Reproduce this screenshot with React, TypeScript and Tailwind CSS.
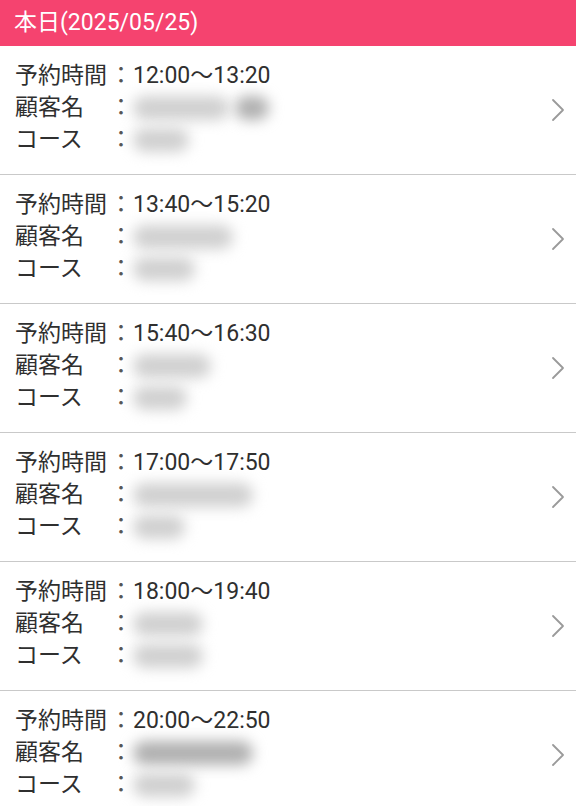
import React from 'react';

type Booking = {
  time: string;
  name: number[]; // blob widths
  nameDark?: boolean;
  course: number;
};

const bookings: Booking[] = [
  { time: '12:00〜13:20', name: [96, 34], course: 56 },
  { time: '13:40〜15:20', name: [100], course: 62 },
  { time: '15:40〜16:30', name: [78], course: 54 },
  { time: '17:00〜17:50', name: [120], course: 52 },
  { time: '18:00〜19:40', name: [70], course: 70 },
  { time: '20:00〜22:50', name: [120], nameDark: true, course: 62 },
];

const Blur = ({ width, dark }: { width: number; dark?: boolean }) => (
  <span
    className={`inline-block h-[24px] rounded-full blur-[7px] ${dark ? 'bg-[#b0b0b0]' : 'bg-[#d0d0d0]'}`}
    style={{ width }}
  />
);

const Chevron = () => (
  <svg width="16" height="24" viewBox="0 0 16 24" fill="none" className="shrink-0">
    <path d="M3 2 L13 12 L3 22" stroke="#9a9a9a" strokeWidth="1.8" strokeLinecap="round" strokeLinejoin="round" />
  </svg>
);

const Row = ({ b }: { b: Booking }) => (
  <div className="flex items-center h-[129px] border-b border-[#c9c9c9] pl-[15px] pr-[10px]">
    <div className="flex-1 pb-[5px] text-[23px] leading-[32px] text-[#2f2f2f]">
      <div className="flex">
        <span className="w-[94px]">予約時間</span>
        <span className="w-[24px] text-center text-[#555]">：</span>
        <span>{b.time}</span>
      </div>
      <div className="flex items-center">
        <span className="w-[94px]">顧客名</span>
        <span className="w-[24px] text-center text-[#555]">：</span>
        <span className="flex items-center gap-[6px]">
          {b.name.map((w, i) => (
            <Blur key={i} width={w} dark={b.nameDark || i === 1} />
          ))}
        </span>
      </div>
      <div className="flex items-center">
        <span className="w-[94px]">コース</span>
        <span className="w-[24px] text-center text-[#555]">：</span>
        <Blur width={b.course} />
      </div>
    </div>
    <Chevron />
  </div>
);

export default function App() {
  return (
    <div
      className="w-[576px] h-[806px] overflow-hidden bg-white"
      style={{ fontFamily: 'Roboto, "Noto Sans CJK JP", sans-serif' }}
    >
      <header className="h-[46px] bg-[#f5436f] flex items-center pl-[14px] text-white text-[23px]">
        本日(2025/05/25)
      </header>
      <div>
        {bookings.map((b, i) => (
          <Row key={i} b={b} />
        ))}
      </div>
    </div>
  );
}
